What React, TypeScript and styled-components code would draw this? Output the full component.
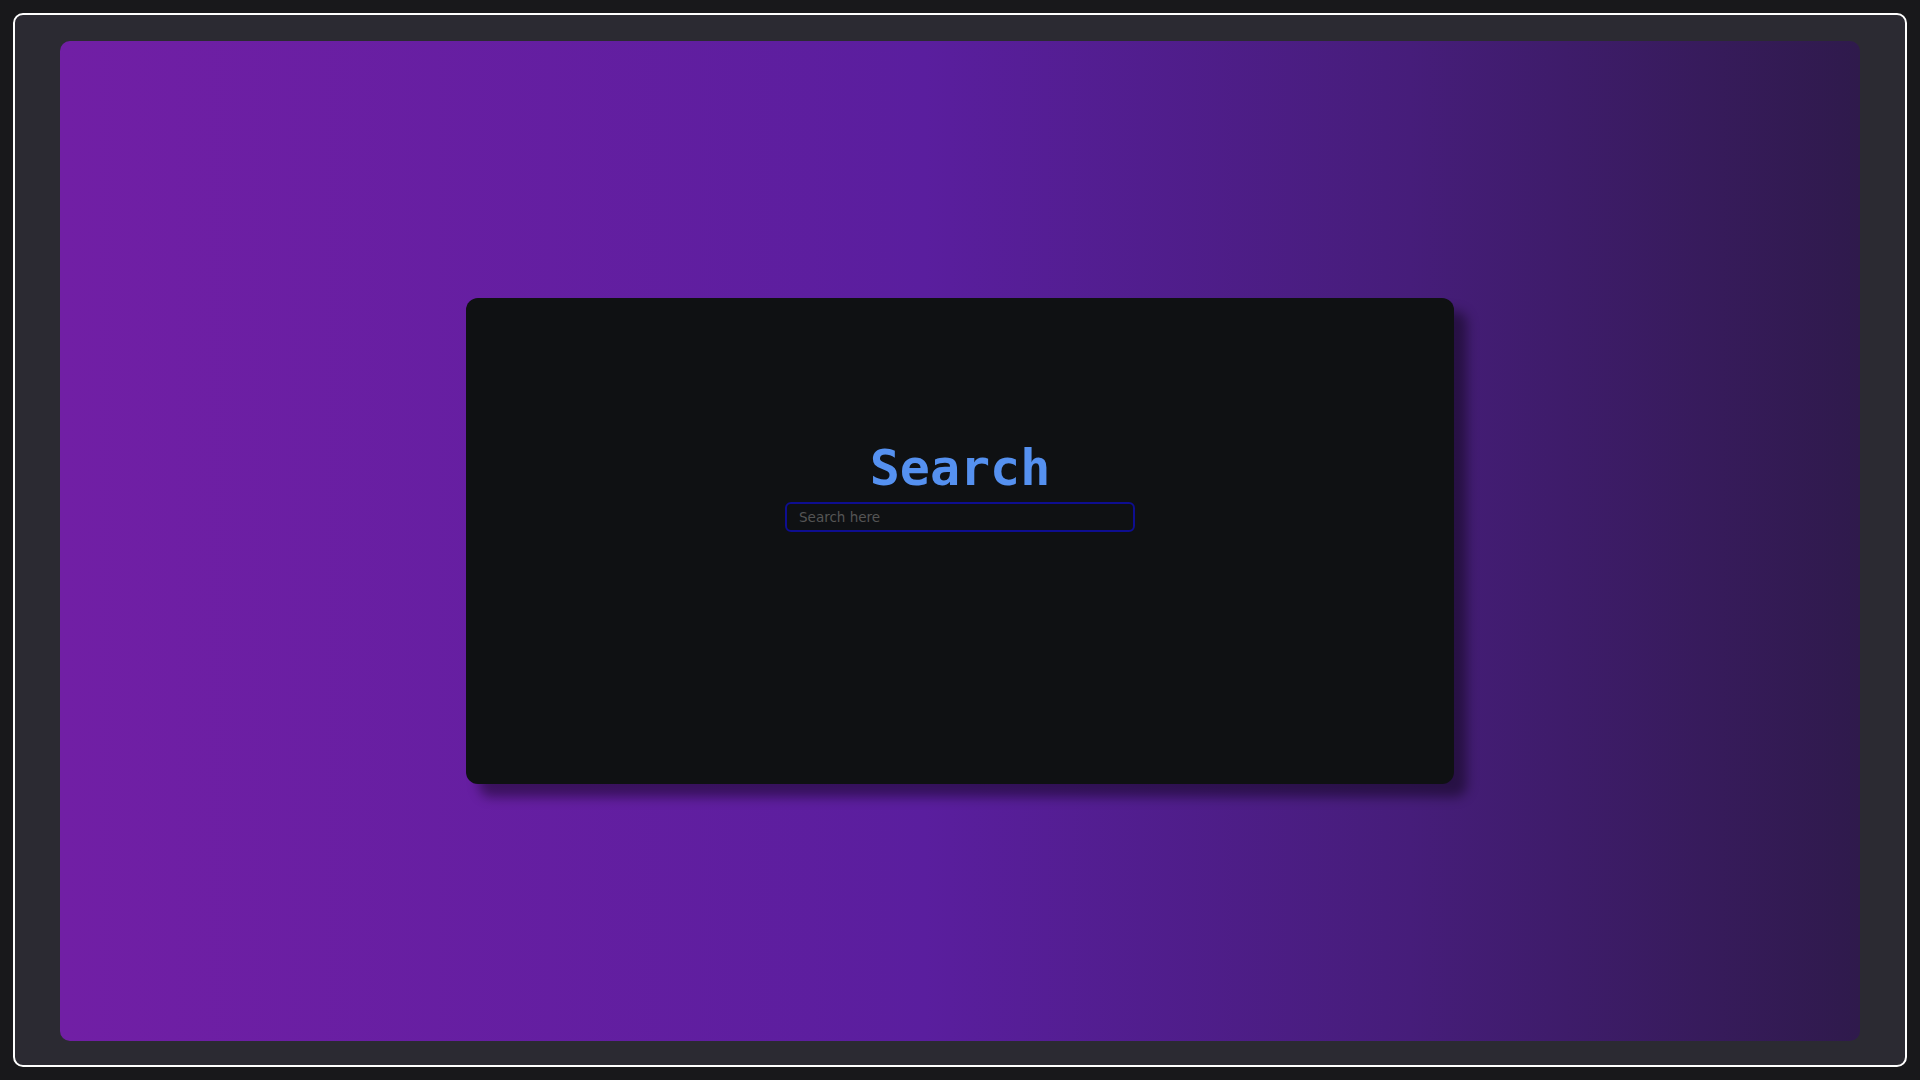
import React from "react";
import styled, { createGlobalStyle } from "styled-components";

const Global = createGlobalStyle`
  * { box-sizing: border-box; }
  html, body { margin: 0; padding: 0; background: #18181b; }
  body { font-family: "DejaVu Sans", sans-serif; }
`;

const Page = styled.div`
  width: 1920px;
  height: 1080px;
  padding: 13px;
  background: #18181b;
`;

const Frame = styled.div`
  width: 100%;
  height: 100%;
  border: 2px solid #ffffff;
  border-radius: 10px;
  background: #2b2a32;
  display: flex;
  align-items: center;
  justify-content: center;
  padding-top: 2px;
`;

const Backdrop = styled.div`
  width: 1800px;
  height: 1000px;
  border-radius: 10px;
  background: linear-gradient(
    to right,
    rgb(113, 31, 165) 0%,
    rgb(90, 30, 158) 48%,
    rgb(70, 29, 122) 75%,
    rgb(47, 26, 76) 100%
  );
  display: flex;
  align-items: center;
  justify-content: center;
`;

const Card = styled.div`
  width: 988px;
  height: 486px;
  border-radius: 12px;
  background: #0f1113;
  box-shadow: 13px 13px 12px rgba(0, 0, 0, 0.42);
  display: flex;
  flex-direction: column;
  align-items: center;
  padding-top: 142px;
  gap: 6px;
`;

const Title = styled.h1`
  margin: 0;
  font-family: "DejaVu Sans Mono", monospace;
  font-weight: 700;
  font-size: 50px;
  line-height: 56px;
  color: #5591f0;
`;

const SearchInput = styled.input`
  width: 350px;
  height: 30px;
  border: 2px solid #0e0e90;
  border-radius: 6px;
  background: #0f1113;
  padding: 0 12px;
  font-family: "DejaVu Sans", sans-serif;
  font-size: 13.5px;
  color: #cccccc;
  outline: none;

  &::placeholder {
    color: #555555;
  }
`;

export default function App() {
  return (
    <>
      <Global />
      <Page>
        <Frame>
          <Backdrop>
            <Card>
              <Title>Search</Title>
              <SearchInput type="text" placeholder="Search here" />
            </Card>
          </Backdrop>
        </Frame>
      </Page>
    </>
  );
}
